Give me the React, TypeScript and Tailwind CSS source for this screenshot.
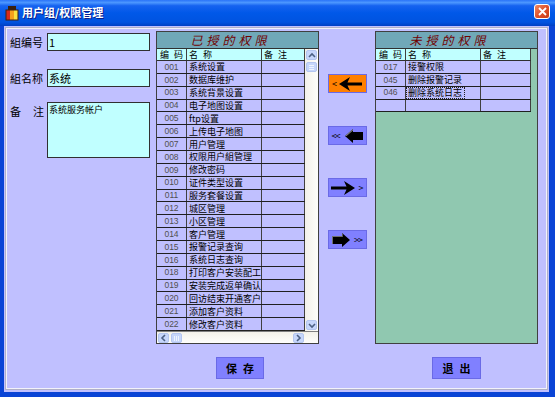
import type { ReactNode } from 'react';

const granted: [string, string][] = [
  ['001', '系统设置'],
  ['002', '数据库维护'],
  ['003', '系统背景设置'],
  ['004', '电子地图设置'],
  ['005', 'ftp设置'],
  ['006', '上传电子地图'],
  ['007', '用户管理'],
  ['008', '权限用户組管理'],
  ['009', '修改密码'],
  ['010', '证件类型设置'],
  ['011', '服务套餐设置'],
  ['012', '城区管理'],
  ['013', '小区管理'],
  ['014', '客户管理'],
  ['015', '报警记录查询'],
  ['016', '系统日志查询'],
  ['018', '打印客户安装配工'],
  ['019', '安装完成返单确认'],
  ['020', '回访结束开通客户'],
  ['021', '添加客户资料'],
  ['022', '修改客户资料'],
];

const notGranted: [string, string][] = [
  ['017', '接警权限'],
  ['045', '删除报警记录'],
  ['046', '删除系统日志'],
  ['', ''],
];

function Chevron({ dir }: { dir: 'up' | 'down' | 'left' | 'right' }) {
  const d = {
    up: 'M1 5 L4 2 L7 5',
    down: 'M1 2 L4 5 L7 2',
    left: 'M5 1 L2 4 L5 7',
    right: 'M2 1 L5 4 L2 7',
  }[dir];
  const vertical = dir === 'up' || dir === 'down';
  return (
    <svg width={vertical ? 8 : 7} height={vertical ? 7 : 8} viewBox={vertical ? '0 0 8 7' : '0 0 7 8'}>
      <path d={d} fill="none" stroke="#4d6185" strokeWidth="1.6" />
    </svg>
  );
}

function ScrollBtn({ children }: { children: ReactNode }) {
  return (
    <div className="w-[13px] h-[12px] p-px shrink-0">
      <div className="w-full h-full rounded-[2px] bg-[#c6d6fb] border border-[#b4c6f0] flex items-center justify-center">
        {children}
      </div>
    </div>
  );
}

function Header({ title }: { title: string }) {
  return (
    <div className="h-[17px] shrink-0 bg-[#70a8b8] border-b border-[#303030] flex items-center justify-center pr-[14px]">
      <span className="text-[12px] leading-none tracking-[4px] italic text-[#700000]">{title}</span>
    </div>
  );
}

function Pair({ a, b }: { a: string; b: string }) {
  return (
    <>
      <span>{a}</span>
      <span className="ml-[5px]">{b}</span>
    </>
  );
}

function ColHeads({ w3 }: { w3: string }) {
  return (
    <div className="h-[12px] flex bg-[#c0ffff] border-b border-[#303030] text-[9px] leading-none text-black whitespace-nowrap">
      <div className="w-[30px] border-r border-[#404040] flex items-center pl-[3px]">
        <Pair a="编" b="码" />
      </div>
      <div className="w-[75px] border-r border-[#404040] flex items-center pl-[2px]">
        <Pair a="名" b="称" />
      </div>
      <div className={w3 + ' border-r border-[#404040] flex items-center pl-[2px]'}>
        <Pair a="备" b="注" />
      </div>
    </div>
  );
}

function Row({ code, name, w3, focus }: { code: string; name: string; w3: string; focus?: boolean }) {
  return (
    <div className="h-[12.86px] flex bg-[#c0c0ff] border-b border-[#202020] leading-none">
      <div className="w-[30px] border-r border-[#404040] flex items-center justify-center text-[8.5px] text-[#505050] font-['Liberation_Sans',sans-serif]">
        {code}
      </div>
      <div className="w-[75px] border-r border-[#404040] flex text-[9px] text-black whitespace-nowrap overflow-hidden">
        <div
          className={
            focus
              ? 'h-full flex items-center pl-px pr-[2px] border border-dotted border-[#202020]'
              : 'h-full flex items-center pl-[2px]'
          }
        >
          {name}
        </div>
      </div>
      <div className={w3 + ' border-r border-[#404040]'} />
    </div>
  );
}

function MidButton({ orange, children }: { orange?: boolean; children: ReactNode }) {
  return (
    <div
      className={
        orange
          ? 'w-[39px] h-[19px] border border-[#6a6ae6] bg-[#ff8000] flex items-center justify-center gap-[2px]'
          : 'w-[39px] h-[19px] border border-[#6a6ae6] bg-[#8080ff] flex items-center justify-center gap-[2px]'
      }
    >
      {children}
    </div>
  );
}

const thinLeft = (
  <svg width="23" height="14" viewBox="0 0 23 14">
    <path d="M0 7 L11 0 L8.5 5.5 L23 5.5 L23 8.5 L8.5 8.5 L11 14 Z" fill="#000" />
  </svg>
);
const thinRight = (
  <svg width="24" height="14" viewBox="0 0 24 14">
    <path d="M24 7 L13 0 L15.5 5.5 L0 5.5 L0 8.5 L15.5 8.5 L13 14 Z" fill="#000" />
  </svg>
);
const blockLeft = (
  <svg width="18" height="14" viewBox="0 0 18 14">
    <path d="M0 7 L8 0 L8 3 L18 3 L18 11 L8 11 L8 14 Z" fill="#000" />
    <path d="M0 7 L8 0 L8 1.5 L1.6 7 Z" fill="#808080" />
  </svg>
);
const blockRight = (
  <svg width="18" height="14" viewBox="0 0 18 14">
    <path d="M18 7 L10 0 L10 3 L0 3 L0 11 L10 11 L10 14 Z" fill="#000" />
    <path d="M0 3 L10 3 L10 0 L10.8 0.8 L10.8 4 L1 4 L1 11 L0 11 Z" fill="#707070" />
  </svg>
);

export default function App() {
  return (
    <div className="w-[555px] h-[397px] bg-[#0a44d6] flex flex-col font-['Noto_Sans_CJK_SC','Noto_Sans',sans-serif] overflow-hidden">
      {/* title bar */}
      <div className="h-[26px] shrink-0 flex items-start bg-[linear-gradient(180deg,#2a74f8_0%,#4c97ff_10%,#1663f0_22%,#0058e8_50%,#0053e0_85%,#0040c4_100%)]">
        <svg className="ml-[5px] mt-[6px]" width="14" height="15" viewBox="0 0 14 15">
          <rect x="3" y="0" width="8" height="4" fill="#3a2010" />
          <rect x="1" y="4" width="4" height="10" fill="#d42a1a" />
          <rect x="5" y="4" width="4" height="10" fill="#f4a01c" />
          <rect x="9" y="4" width="4" height="10" fill="#f8e040" />
          <rect x="1" y="4" width="12" height="10" fill="none" stroke="#402010" strokeWidth="1" />
        </svg>
        <span className="ml-[3px] mt-[5px] text-[11px] leading-[14px] font-bold text-white [text-shadow:1px_1px_0_#0a1e8a]">
          用户组/权限管理
        </span>
        <div className="ml-auto mr-[5px] mt-[4px] w-[16px] h-[15px] rounded-[3px] border border-white bg-[linear-gradient(135deg,#f08a62_0%,#e0522c_50%,#c83c14_100%)] flex items-center justify-center">
          <svg width="9" height="9" viewBox="0 0 9 9">
            <path d="M1 1 L8 8 M8 1 L1 8" stroke="#fff" strokeWidth="1.8" />
          </svg>
        </div>
      </div>

      {/* client */}
      <div className="ml-[4px] w-[545px] h-[366px] bg-[#c0c0ff] p-px">
        <div className="w-[543px] h-[363px] border border-[#b0b0c8]">
          <div className="w-full h-full border border-[#f2f2fa] pl-[3px] pt-[2px] flex flex-col text-black">
            <div className="flex items-start h-[313px]">
              {/* left form */}
              <div className="w-[146px] flex flex-col">
                <div className="mt-[2px] flex items-center">
                  <div className="w-[37px] text-[11px] leading-none">組编号</div>
                  <div className="w-[103px] h-[18px] bg-[#c0ffff] border border-[#303030] flex items-center pl-px text-[11px] leading-none">1</div>
                </div>
                <div className="mt-[18px] flex items-center">
                  <div className="w-[37px] text-[11px] leading-none">組名称</div>
                  <div className="w-[103px] h-[18px] bg-[#c0ffff] border border-[#303030] flex items-center pl-px text-[11px] leading-none">系统</div>
                </div>
                <div className="mt-[15px] flex items-start">
                  <div className="w-[37px] mt-[4px] text-[11px] leading-none flex">
                    <span>备</span>
                    <span className="ml-[12px]">注</span>
                  </div>
                  <div className="w-[103px] h-[56px] bg-[#c0ffff] border border-[#303030] pl-px pt-[2px] text-[9px] leading-none">
                    系统服务帐户
                  </div>
                </div>
              </div>

              {/* granted table */}
              <div className="w-[163px] h-[313px] border border-[#404040] flex flex-col bg-[#c0c0ff]">
                <Header title="已授的权限" />
                <div className="flex flex-1 min-h-0">
                  <div className="w-[148px] overflow-hidden">
                    <ColHeads w3="w-[43px]" />
                    {granted.map(([c, n]) => (
                      <Row key={c} code={c} name={n} w3="w-[43px]" />
                    ))}
                  </div>
                  <div className="w-[13px] flex flex-col bg-[linear-gradient(90deg,#f3f1ea,#fefefb)]">
                    <ScrollBtn>
                      <Chevron dir="up" />
                    </ScrollBtn>
                    <div className="w-[13px] h-[12px] p-px">
                      <div className="w-full h-full rounded-[2px] bg-[#c6d6fb] border border-[#b4c6f0] flex flex-col items-center justify-center gap-px">
                        <div className="w-[5px] h-px bg-[#eef4fe]" />
                        <div className="w-[5px] h-px bg-[#eef4fe]" />
                        <div className="w-[5px] h-px bg-[#eef4fe]" />
                      </div>
                    </div>
                    <div className="flex-1" />
                    <ScrollBtn>
                      <Chevron dir="down" />
                    </ScrollBtn>
                  </div>
                </div>
                <div className="h-[12px] shrink-0 flex bg-[linear-gradient(180deg,#f3f1ea,#fefefb)] border-t border-[#808080]">
                  <ScrollBtn>
                    <Chevron dir="left" />
                  </ScrollBtn>
                  <div className="w-[13px] h-[12px] p-px">
                    <div className="w-full h-full rounded-[2px] bg-[#c6d6fb] border border-[#b4c6f0] flex items-center justify-center gap-px">
                      <div className="w-px h-[5px] bg-[#eef4fe]" />
                      <div className="w-px h-[5px] bg-[#eef4fe]" />
                      <div className="w-px h-[5px] bg-[#eef4fe]" />
                    </div>
                  </div>
                  <div className="flex-1" />
                  <ScrollBtn>
                    <Chevron dir="right" />
                  </ScrollBtn>
                  <div className="w-[13px]" />
                </div>
              </div>

              {/* middle buttons */}
              <div className="w-[56px] flex flex-col items-center pt-[43px] gap-[33px]">
                <MidButton orange>
                  <span className="text-[9px] leading-none">&lt;</span>
                  {thinLeft}
                </MidButton>
                <MidButton>
                  <span className="text-[9px] leading-none tracking-[-1px]">&lt;&lt;</span>
                  <span className="ml-[3px]">{blockLeft}</span>
                </MidButton>
                <MidButton>
                  {thinRight}
                  <span className="ml-[2px] text-[9px] leading-none">&gt;</span>
                </MidButton>
                <MidButton>
                  {blockRight}
                  <span className="ml-[2px] text-[9px] leading-none tracking-[-1px]">&gt;&gt;</span>
                </MidButton>
              </div>

              {/* not granted table */}
              <div className="w-[163px] h-[313px] border border-[#404040] flex flex-col bg-[#90c8b0]">
                <Header title="未授的权限" />
                <div className="w-[155px]">
                  <ColHeads w3="w-[50px]" />
                  {notGranted.map(([c, n], i) => (
                    <Row key={i} code={c} name={n} w3="w-[50px]" focus={i === 2} />
                  ))}
                </div>
              </div>
            </div>

            {/* bottom buttons */}
            <div className="mt-[13px] flex">
              <div className="ml-[206px] w-[48px] h-[22px] border border-[#6a6ae6] bg-[#8080ff] flex items-center justify-center text-[11px] font-bold leading-none">
                <span>保</span>
                <span className="ml-[6px]">存</span>
              </div>
              <div className="ml-[168px] w-[49px] h-[22px] border border-[#6a6ae6] bg-[#8080ff] flex items-center justify-center text-[11px] font-bold leading-none">
                <span>退</span>
                <span className="ml-[6px]">出</span>
              </div>
            </div>
          </div>
        </div>
      </div>
    </div>
  );
}
